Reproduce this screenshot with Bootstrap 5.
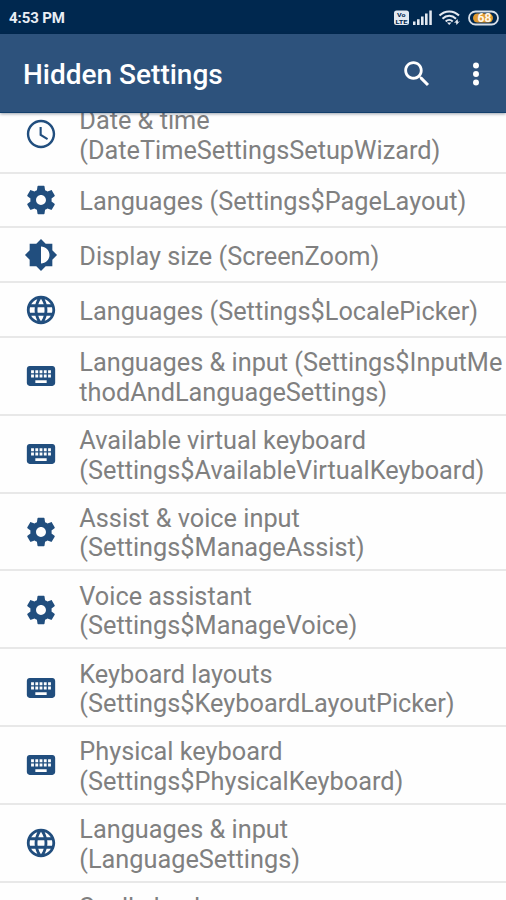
<!DOCTYPE html>
<html lang="en">
<head>
<meta charset="utf-8">
<meta name="viewport" content="width=device-width, initial-scale=1">
<title>Hidden Settings</title>
<link href="https://cdn.jsdelivr.net/npm/bootstrap@5.3.0/dist/css/bootstrap.min.css" rel="stylesheet">
<style>
body{font-family:Roboto,"Liberation Sans",sans-serif;background:#fefefe}
.status{height:34px;background:#00284f;color:#e9eef5;font-size:15px;font-weight:700;padding:1px 7px 0 9px}
.status .clock{letter-spacing:-.1px;padding-top:1px}
.appbar{height:79px;background:#2d527c;border-bottom:1px solid #123f6c;box-shadow:0 1px 3px rgba(0,20,50,.4);padding:1px 13px 0 23px}
.appbar h1{font-size:28px;font-weight:500;color:#fff;padding-top:3px}
.appbar .find{margin-right:25px}
.entries{margin-top:-17.3px}
.entry{height:54.8px;padding:2px 0 0 24px;border-bottom:2px solid #e8e8e8;color:#808080;font-size:25.3px;line-height:29.5px}
.entry.two{height:77.83px}
.entry svg{width:34px;height:34px;fill:#214e7e;margin:-1px 21.3px 0 0}
.entry span{white-space:nowrap;padding-top:2px}
.entry .solo{padding-left:55.3px}
</style>
<script src="https://cdn.jsdelivr.net/npm/bootstrap@5.3.0/dist/js/bootstrap.bundle.min.js"></script>
</head>
<body class="vh-100 d-flex flex-column overflow-hidden">
<svg class="d-none">
<symbol id="clock" viewBox="0 0 24 24"><path d="M11.99 2C6.47 2 2 6.48 2 12s4.47 10 9.99 10C17.52 22 22 17.52 22 12S17.52 2 11.99 2zM12 20.3c-4.58 0-8.3-3.72-8.3-8.3S7.42 3.7 12 3.7s8.3 3.72 8.3 8.3-3.72 8.3-8.3 8.3zM12.5 7H11v6l5.25 3.15.75-1.23-4.5-2.67z"/></symbol>
<symbol id="gear" viewBox="0 0 24 24"><path d="M19.43 12.98c.04-.32.07-.64.07-.98s-.03-.66-.07-.98l2.11-1.65c.19-.15.24-.42.12-.64l-2-3.46c-.12-.22-.39-.3-.61-.22l-2.49 1c-.52-.4-1.08-.73-1.69-.98l-.38-2.65C14.46 2.18 14.25 2 14 2h-4c-.25 0-.46.18-.49.42l-.38 2.65c-.61.25-1.17.59-1.69.98l-2.49-1c-.23-.09-.49 0-.61.22l-2 3.46c-.13.22-.07.49.12.64l2.11 1.65c-.04.32-.07.65-.07.98s.03.66.07.98l-2.11 1.65c-.19.15-.24.42-.12.64l2 3.46c.12.22.39.3.61.22l2.49-1c.52.4 1.08.73 1.69.98l.38 2.65c.03.24.24.42.49.42h4c.25 0 .46-.18.49-.42l.38-2.65c.61-.25 1.17-.59 1.69-.98l2.49 1c.23.09.49 0 .61-.22l2-3.46c.12-.22.07-.49-.12-.64l-2.11-1.65zM12 15.5c-1.93 0-3.5-1.57-3.5-3.5s1.57-3.5 3.5-3.5 3.5 1.57 3.5 3.5-1.57 3.5-3.5 3.5z"/></symbol>
<symbol id="bright" viewBox="0 0 24 24"><path fill-rule="evenodd" d="M20 15.31L23.31 12 20 8.69V4h-4.69L12 .69 8.69 4H4v4.69L.69 12 4 15.31V20h4.69L12 23.31 15.31 20H20v-4.69zM12 18V6c3.31 0 6 2.69 6 6s-2.69 6-6 6z"/></symbol>
<symbol id="globe" viewBox="0 0 24 24"><path d="M11.99 2C6.47 2 2 6.48 2 12s4.47 10 9.99 10C17.52 22 22 17.52 22 12S17.52 2 11.99 2zm6.93 6h-2.95c-.32-1.25-.78-2.45-1.38-3.56 1.84.63 3.37 1.91 4.33 3.56zM12 4.04c.83 1.2 1.48 2.53 1.91 3.96h-3.82c.43-1.43 1.08-2.76 1.91-3.96zM4.26 14C4.1 13.36 4 12.69 4 12s.1-1.36.26-2h3.38c-.08.66-.14 1.32-.14 2s.06 1.34.14 2H4.26zm.82 2h2.95c.32 1.25.78 2.45 1.38 3.56-1.84-.63-3.37-1.9-4.33-3.56zm2.95-8H5.08c.96-1.66 2.49-2.93 4.33-3.56C8.81 5.55 8.35 6.75 8.03 8zM12 19.96c-.83-1.2-1.48-2.53-1.91-3.96h3.82c-.43 1.43-1.08 2.76-1.91 3.96zM14.34 14H9.66c-.09-.66-.16-1.32-.16-2s.07-1.35.16-2h4.68c.09.65.16 1.32.16 2s-.07 1.34-.16 2zm.25 5.56c.6-1.11 1.06-2.31 1.38-3.56h2.95c-.96 1.65-2.49 2.93-4.33 3.56zM16.36 14c.08-.66.14-1.32.14-2s-.06-1.34-.14-2h3.38c.16.64.26 1.31.26 2s-.1 1.36-.26 2h-3.38z"/></symbol>
<symbol id="keys" viewBox="0 0 24 24"><path d="M20 5H4c-1.1 0-1.99.9-1.99 2L2 17c0 1.1.9 2 2 2h16c1.1 0 2-.9 2-2V7c0-1.1-.9-2-2-2zm-9 3h2v2h-2V8zm0 3h2v2h-2v-2zM8 8h2v2H8V8zm0 3h2v2H8v-2zm-1 2H5v-2h2v2zm0-3H5V8h2v2zm9 7H8v-2h8v2zm0-4h-2v-2h2v2zm0-3h-2V8h2v2zm3 3h-2v-2h2v2zm0-3h-2V8h2v2z"/></symbol>
</svg>
<header class="sticky-top flex-shrink-0">
<div class="status d-flex align-items-center justify-content-between">
<span class="clock">4:53 PM</span>
<svg width="107" height="20" viewBox="0 0 107 20" fill="#e3e9f1">
<rect x="2" y="2.5" width="15" height="14.5" rx="2.5"/>
<g fill="#00284f" font-size="6" font-weight="700"><text x="5" y="8.8" textLength="8.500" lengthAdjust="spacingAndGlyphs">Vo</text><text x="3.500" y="15.800" textLength="12" lengthAdjust="spacingAndGlyphs">LTE</text></g>
<path d="M21 13.5h2.5V17H21zM25 11.3h2.6V17H25zM29 8.5h2.6V17H29zM33 5.5h2.6V17H33zM37.300 2.500h2.500V17h-2.500z"/>
<path d="M47.500 7.500c5.500-5.500 14-5.500 19.500 0M50.500 10.700c4-4 9.500-4 13.500 0M53.700 13.500c2-2 5-2 7 0" fill="none" stroke="#e3e9f1" stroke-width="2"/>
<path d="M55 14.500h4.500L57.200 17zM62 15l3.500-4 .5 3 2-1-3.500 4-.5-2.500z"/>
<rect x="77" y="3.500" width="29" height="13" rx="6.500" fill="#00284f" stroke="#d7dfe9" stroke-width="1.800"/>
<path d="M85.500 5.500H96.500a4.500 4.500 0 0 1 0 9H85.500a4.500 4.500 0 0 1 0-9z" fill="#e09a30"/>
<text x="85.500" y="14.300" font-size="12" font-weight="700" fill="#fff7e8">68</text>
</svg>
</div>
<nav class="appbar d-flex align-items-center justify-content-between">
<h1 class="m-0">Hidden Settings</h1>
<div class="d-flex align-items-center">
<svg class="find" width="34" height="34" viewBox="0 0 24 24" fill="#fff"><path d="M15.500 14h-.79l-.28-.27C15.410 12.590 16 11.110 16 9.500 16 5.910 13.090 3 9.500 3S3 5.910 3 9.500 5.910 16 9.500 16c1.610 0 3.090-.59 4.230-1.570l.27.28v.79l5 4.990L20.490 19l-4.990-5zm-6 0C7.010 14 5 11.990 5 9.500S7.010 5 9.500 5 14 7.010 14 9.500 11.990 14 9.500 14z"/></svg>
<svg width="34" height="34" viewBox="0 0 24 24" fill="#fff"><circle cx="12" cy="6" r="2.100"/><circle cx="12" cy="12" r="2.100"/><circle cx="12" cy="18" r="2.100"/></svg>
</div>
</nav>
</header>
<main class="flex-grow-1 overflow-hidden">
<div class="entries">
<div class="entry two d-flex align-items-center"><svg><use href="#clock"/></svg><span>Date &amp; time<br>(DateTimeSettingsSetupWizard)</span></div>
<div class="entry d-flex align-items-center"><svg><use href="#gear"/></svg><span>Languages (Settings$PageLayout)</span></div>
<div class="entry d-flex align-items-center"><svg><use href="#bright"/></svg><span>Display size (ScreenZoom)</span></div>
<div class="entry d-flex align-items-center"><svg><use href="#globe"/></svg><span>Languages (Settings$LocalePicker)</span></div>
<div class="entry two d-flex align-items-center"><svg><use href="#keys"/></svg><span>Languages &amp; input (Settings$InputMe<br>thodAndLanguageSettings)</span></div>
<div class="entry two d-flex align-items-center"><svg><use href="#keys"/></svg><span>Available virtual keyboard<br>(Settings$AvailableVirtualKeyboard)</span></div>
<div class="entry two d-flex align-items-center"><svg><use href="#gear"/></svg><span>Assist &amp; voice input<br>(Settings$ManageAssist)</span></div>
<div class="entry two d-flex align-items-center"><svg><use href="#gear"/></svg><span>Voice assistant<br>(Settings$ManageVoice)</span></div>
<div class="entry two d-flex align-items-center"><svg><use href="#keys"/></svg><span>Keyboard layouts<br>(Settings$KeyboardLayoutPicker)</span></div>
<div class="entry two d-flex align-items-center"><svg><use href="#keys"/></svg><span>Physical keyboard<br>(Settings$PhysicalKeyboard)</span></div>
<div class="entry two d-flex align-items-center"><svg><use href="#globe"/></svg><span>Languages &amp; input<br>(LanguageSettings)</span></div>
<div class="entry two d-flex align-items-start pt-2"><span class="solo">Spell checker</span></div>
</div>
</main>
</body>
</html>
